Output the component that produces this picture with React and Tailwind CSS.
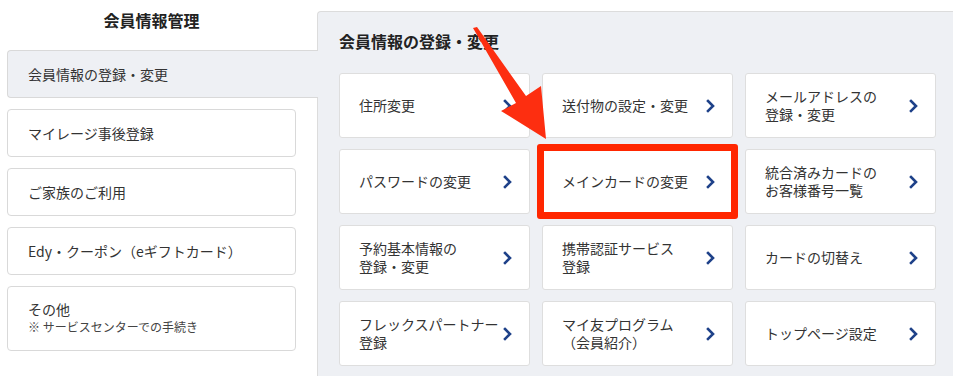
const sideItems = [
  { label: "マイレージ事後登録" },
  { label: "ご家族のご利用" },
  { label: "Edy・クーポン（eギフトカード）" },
  { label: "その他", note: "※ サービスセンターでの手続き" },
];

const cards = [
  ["住所変更"],
  ["送付物の設定・変更"],
  ["メールアドレスの", "登録・変更"],
  ["パスワードの変更"],
  ["メインカードの変更"],
  ["統合済みカードの", "お客様番号一覧"],
  ["予約基本情報の", "登録・変更"],
  ["携帯認証サービス", "登録"],
  ["カードの切替え"],
  ["フレックスパートナー", "登録"],
  ["マイ友プログラム", "（会員紹介）"],
  ["トップページ設定"],
];

function Chevron() {
  return (
    <svg width="9" height="14" viewBox="0 0 9 14" className="shrink-0">
      <path d="M2 2l5 5-5 5" fill="none" stroke="#1e4189" strokeWidth="2.6" strokeLinecap="square" />
    </svg>
  );
}

function Card({ lines, highlight }) {
  return (
    <div className="relative h-[65px] bg-white border border-[#dedede] rounded-[3px] flex items-center pl-[19px] pr-[17px]">
      <div className="flex-1 flex flex-col gap-[1px] text-[14px] leading-[17px] text-[#333] whitespace-nowrap">
        {lines.map((l, i) => (
          <div key={i}>{l}</div>
        ))}
      </div>
      <Chevron />
      {highlight && (
        <div className="absolute -left-[6px] -top-[6px] -right-[6px] -bottom-[6px] border-[7px] border-[#ff2600] rounded-[3px] z-10" />
      )}
    </div>
  );
}

export default function App() {
  return (
    <div
      className="relative w-[953px] h-[376px] overflow-hidden bg-white flex"
      style={{ fontFamily: '"Noto Sans CJK JP", "Noto Sans", sans-serif' }}
    >
      {/* sidebar */}
      <div className="w-[317px] shrink-0 pl-[7px]">
        <div className="w-[289px] h-[50px] pt-[8px] text-center text-[16px] leading-[24px] font-bold text-[#222]">
          会員情報管理
        </div>
        <div className="relative z-10 w-[311px] h-[48px] bg-[#eef0f4] border border-r-0 border-[#d9d9d9] rounded-l-[4px] flex items-center pl-[20px] text-[14px] text-[#333]">
          会員情報の登録・変更
        </div>
        <div className="flex flex-col gap-[11px] mt-[11px]">
          {sideItems.map((it) => (
            <div
              key={it.label}
              className={
                "w-[289px] bg-white border border-[#d9d9d9] rounded-[4px] flex flex-col justify-center pl-[20px] text-[#333] " +
                (it.note ? "h-[65px] pb-[2px]" : "h-[48px]")
              }
            >
              <div className="text-[14px] leading-[18px]">{it.label}</div>
              {it.note && <div className="text-[12px] leading-[17px] text-[#444]">{it.note}</div>}
            </div>
          ))}
        </div>
      </div>

      {/* main panel */}
      <div className="flex-1 mt-[11px] bg-[#eef0f4] border-l border-t border-[#dcdcdc] rounded-tl-[4px] pl-[21px] pt-[18px]">
        <div className="h-[22px] text-[16px] leading-[22px] font-bold text-[#222]">会員情報の登録・変更</div>
        <div className="mt-[21px] grid grid-cols-[191px_191px_191px] gap-x-[12px] gap-y-[11px]">
          {cards.map((lines, i) => (
            <Card key={i} lines={lines} highlight={i === 4} />
          ))}
        </div>
      </div>

      {/* annotation arrow */}
      <svg className="absolute left-0 top-0 z-20 pointer-events-none" width="953" height="376">
        <polygon
          points="473,28 477,27 526,96 541,86 546,139 501,111 516,103"
          fill="#fd2e10"
        />
      </svg>
    </div>
  );
}
